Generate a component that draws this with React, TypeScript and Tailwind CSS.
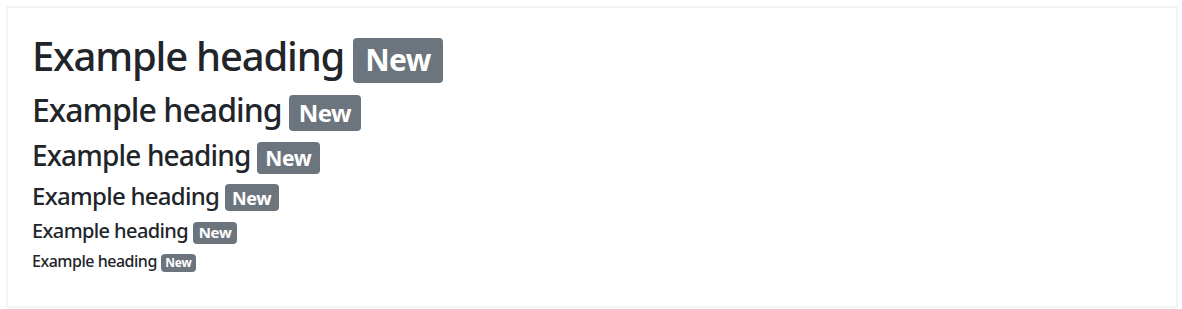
import React from "react";

const levels = [
  { Tag: "h1", cls: "text-[40px]" },
  { Tag: "h2", cls: "text-[32px]" },
  { Tag: "h3", cls: "text-[28px]" },
  { Tag: "h4", cls: "text-[24px]" },
  { Tag: "h5", cls: "text-[20px]" },
  { Tag: "h6", cls: "text-[16px]" },
] as const;

export default function App() {
  return (
    <div className="bg-white w-[1182px] h-[309px] pt-[6px] pl-[6px] pr-[4px] pb-[1px] font-['Noto_Sans',sans-serif]">
      <div className="h-full border-2 border-[#f3f3f3] pt-[24px] pl-[24px] pr-[24px]">
        {levels.map(({ Tag, cls }) => (
          <Tag key={Tag} className={`${cls} font-medium leading-[1.2] mb-2 text-[#212529] tracking-[-0.03em]`}>
            Example heading{" "}
            <span className="inline-block text-[75%] font-bold leading-none tracking-[-0.02em] px-[0.4em] py-[0.25em] rounded-[4px] bg-[#6c757d] text-white align-baseline">
              New
            </span>
          </Tag>
        ))}
      </div>
    </div>
  );
}
